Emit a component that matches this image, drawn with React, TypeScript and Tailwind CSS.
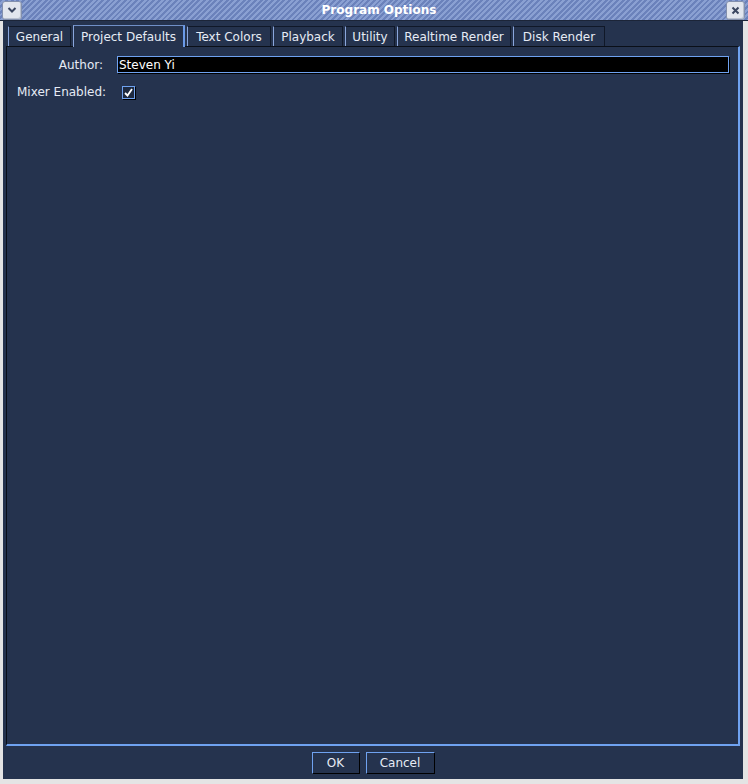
const tabs = [
  { name: "General", w: "w-[63px]" },
  { name: "Project Defaults", w: "w-[112px]" },
  { name: "Text Colors", w: "w-[84px]" },
  { name: "Playback", w: "w-[70px]" },
  { name: "Utility", w: "w-[50px]" },
  { name: "Realtime Render", w: "w-[114px]" },
  { name: "Disk Render", w: "w-[92px]" },
];

const ProgramOptions = () => {
  const selected = "Project Defaults";

  return (
    <div className="w-[748px] h-[784px] bg-[#e4e4e4] pl-[3px] pr-[5px] pb-[5px] flex flex-col font-['DejaVu_Sans',sans-serif] text-[12px] text-[#e6ebf5]">
      {/* title bar */}
      <div className="h-[21px] -mr-[5px] -ml-[3px] flex items-center border-b border-[#1c2538] bg-[repeating-linear-gradient(135deg,#6b82bb_0px,#6b82bb_2px,#8aa0d2_2px,#8aa0d2_4px)]">
        <div className="ml-[2px] w-[20px] h-[19px] bg-[#e2e6ee] border border-[#8390ad] rounded-[3px] shadow-[inset_-1px_-1px_0_#b8c0d0] flex items-center justify-center">
          <svg width="10" height="8" viewBox="0 0 10 8">
            <path d="M1.5 2 L5 5.5 L8.5 2" stroke="#3a4660" strokeWidth="2" fill="none" />
          </svg>
        </div>
        <div className="flex-1 text-center font-bold text-white text-[12px] pl-[10px]">
          Program Options
        </div>
        <div className="mr-[3px] w-[19px] h-[19px] bg-[#e2e6ee] border border-[#8390ad] rounded-[3px] shadow-[inset_-1px_-1px_0_#b8c0d0] flex items-center justify-center">
          <svg width="9" height="9" viewBox="0 0 9 9">
            <path d="M1.5 1.5 L7.5 7.5 M7.5 1.5 L1.5 7.5" stroke="#3a4660" strokeWidth="2" />
          </svg>
        </div>
      </div>

      <div className="flex-1 bg-[#25334e] flex flex-col">
        {/* tabs */}
        <div className="flex items-end h-[23px] pl-[5px] mt-[2px]">
          {tabs.map((tab) =>
            tab.name === selected ? (
              <div
                key={tab.name}
                className={`${tab.w} h-[22px] mr-[2px] bg-[#25334e] border-t border-l border-r-2 border-t-[#7090c8] border-l-[#8aa6dc] border-r-[#6a9ae8] flex items-center justify-center -mb-px relative z-10`}
              >
                {tab.name}
              </div>
            ) : (
              <div
                key={tab.name}
                className={`${tab.w} h-[20px] mr-[2px] border-t border-l border-r border-t-[#101828] border-l-[#8aa6dc] border-r-[#101828] flex items-center justify-center`}
              >
                {tab.name}
              </div>
            )
          )}
        </div>

        {/* tab content */}
        <div className="mx-[3px] flex-1 border-t border-l border-[#0a0f18] border-r-2 border-b-2 border-r-[#6fa2f0] border-b-[#6fa2f0] pt-[9px]">
          <div className="flex items-center h-[17px]">
            <div className="w-[96px] text-right">Author:</div>
            <div className="ml-[14px] w-[612px] h-[17px] bg-black border border-[#6fa2f0] shadow-[1px_1px_0_#000] flex items-center px-px text-white">
              Steven Yi
            </div>
          </div>
          <div className="flex items-center mt-[11px] h-[16px]">
            <div className="pl-[10px] w-[115px]">Mixer Enabled:</div>
            <div className="w-[13px] h-[13px] bg-[#1e2a40] border border-[#6fa2f0] shadow-[1px_1px_0_#000] flex items-center justify-center mt-[1px]">
              <svg width="9" height="9" viewBox="0 0 9 9">
                <path d="M1 5 L3.5 7.5 L8 1" stroke="#ffffff" strokeWidth="1.8" fill="none" />
              </svg>
            </div>
          </div>
        </div>

        {/* buttons */}
        <div className="h-[33px] flex items-center justify-center gap-[6px]">
          <button className="w-[48px] h-[22px] border-t border-l border-[#6fa2f0] border-r border-b border-r-black border-b-black text-[#e6ebf5]">
            OK
          </button>
          <button className="w-[69px] h-[22px] border-t border-l border-[#6fa2f0] border-r border-b border-r-black border-b-black text-[#e6ebf5]">
            Cancel
          </button>
        </div>
      </div>
    </div>
  );
};

export default function App() {
  return <ProgramOptions />;
}
